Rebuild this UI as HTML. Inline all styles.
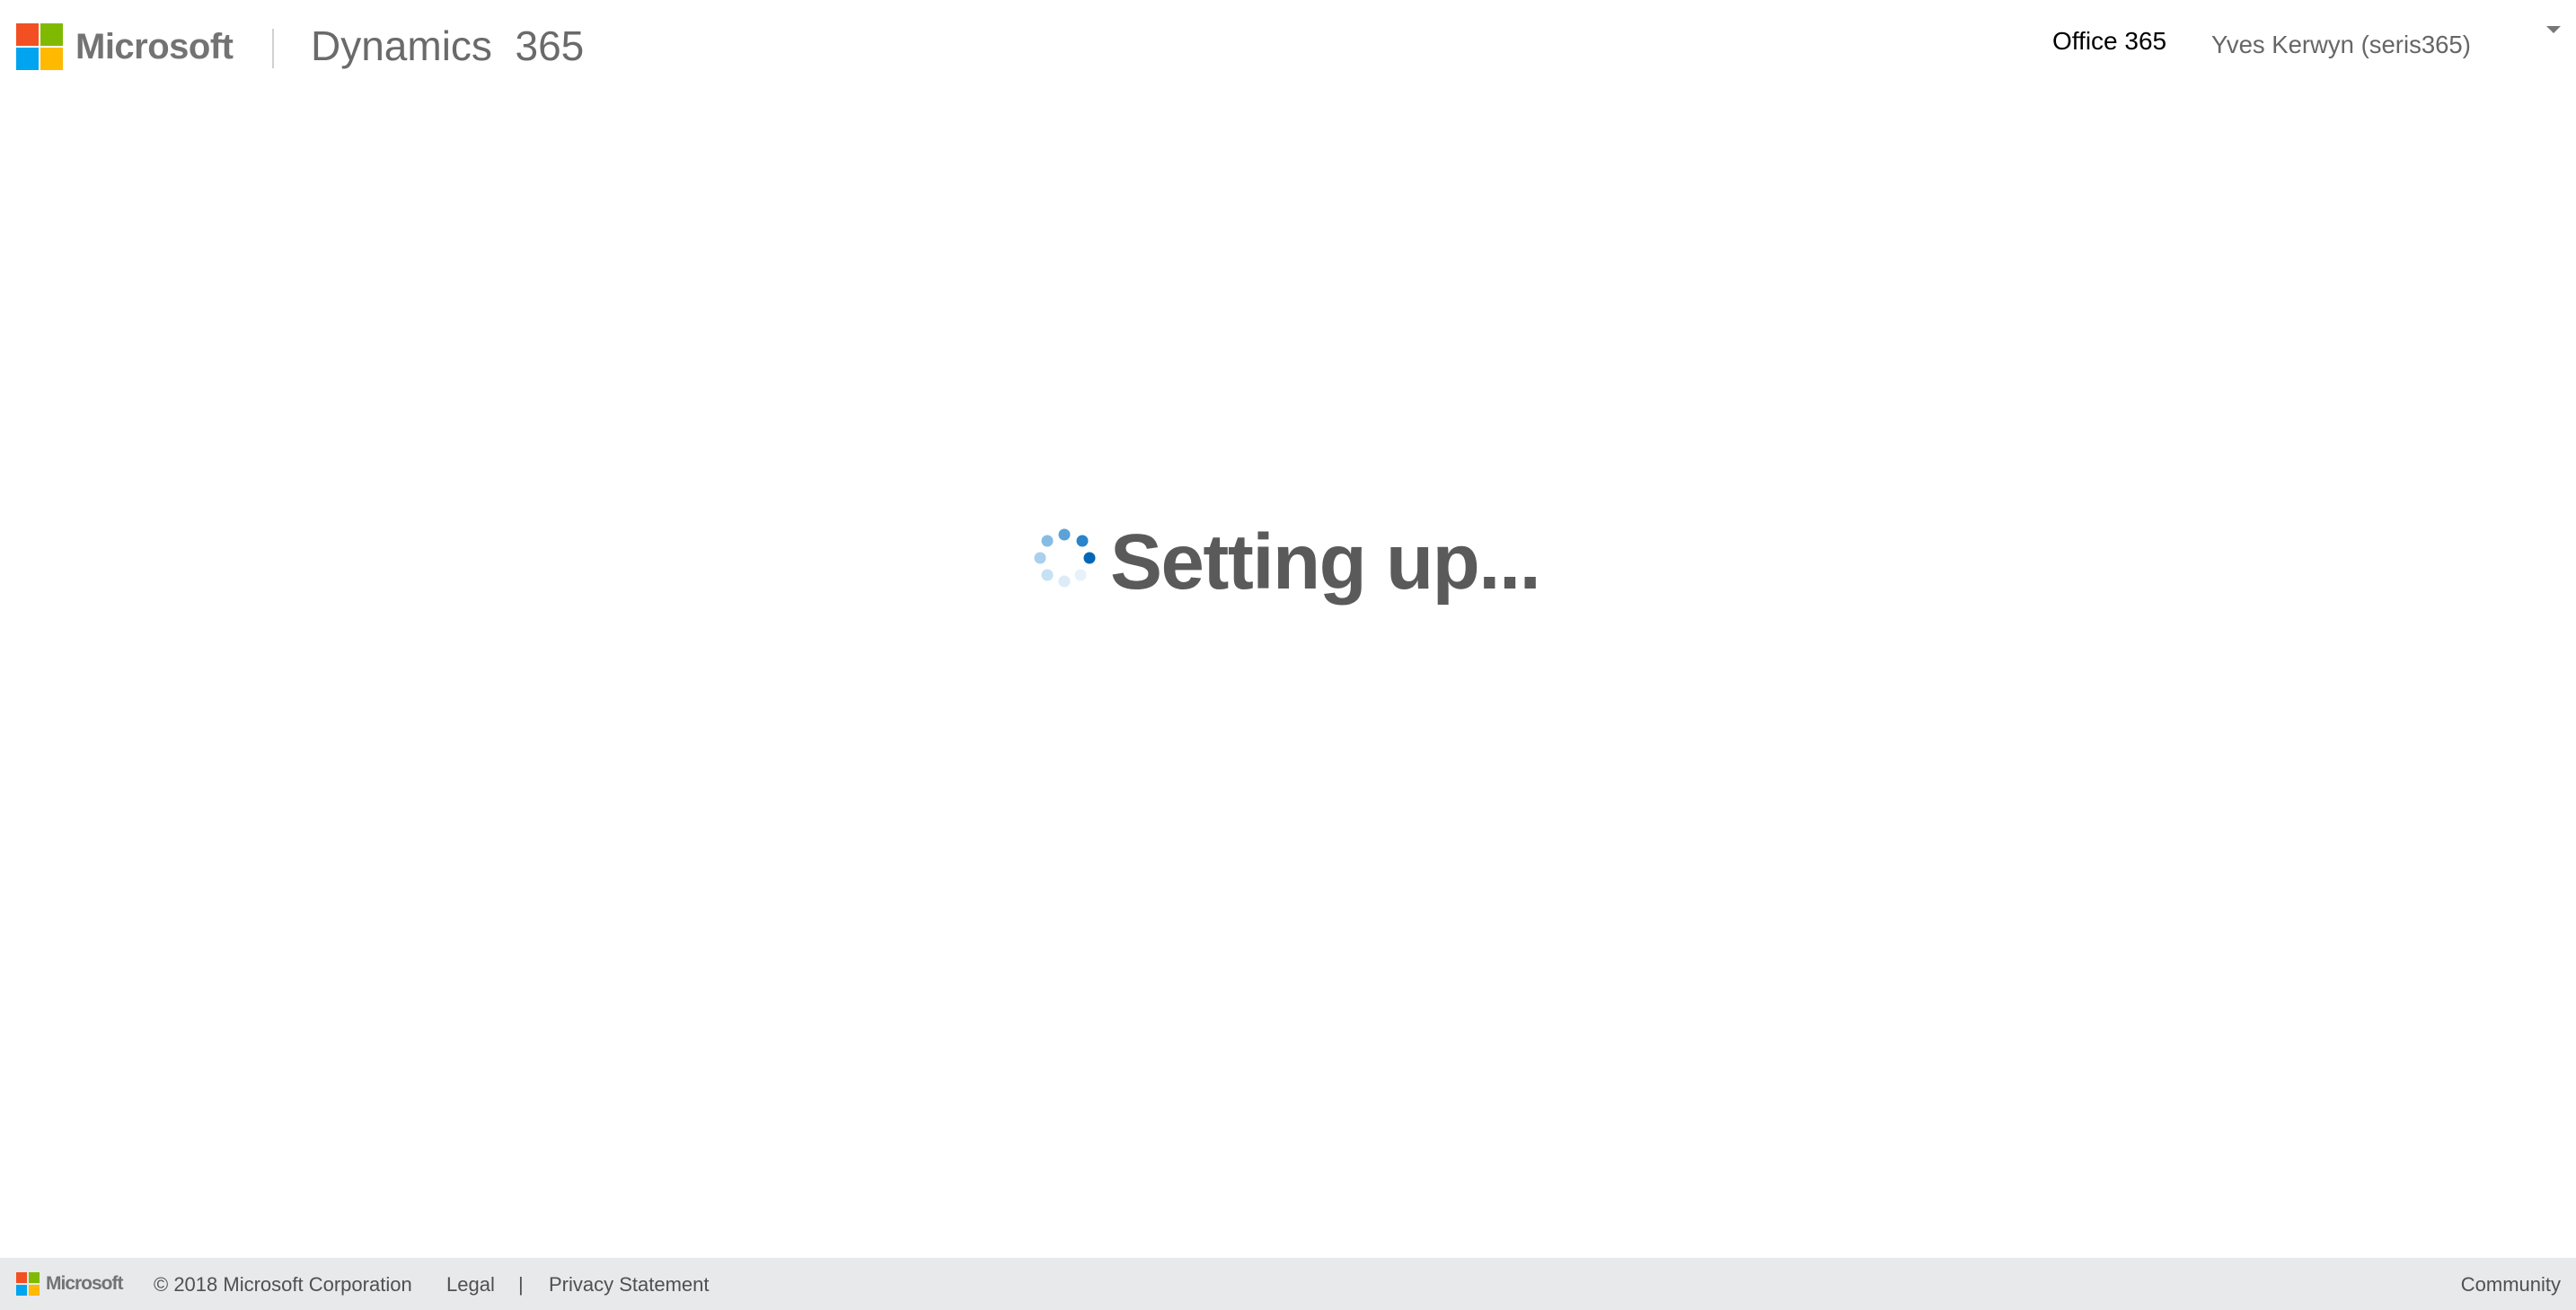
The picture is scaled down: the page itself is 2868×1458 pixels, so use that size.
<!DOCTYPE html>
<html><head><meta charset="utf-8"><style>
html,body{margin:0;padding:0;width:2868px;height:1458px;background:#fff;overflow:hidden;position:relative;font-family:"Liberation Sans",sans-serif}
.a{position:absolute;white-space:nowrap}
</style></head><body>
<div class="a" style="left:18px;top:26px;width:25px;height:25px;background:#f25022"></div>
<div class="a" style="left:45px;top:26px;width:25px;height:25px;background:#7fba00"></div>
<div class="a" style="left:18px;top:53px;width:25px;height:25px;background:#00a4ef"></div>
<div class="a" style="left:45px;top:53px;width:25px;height:25px;background:#ffb900"></div>
<div class="a" style="left:84px;top:27px;font-size:40px;line-height:50px;color:#737373;font-weight:bold;letter-spacing:-0.5px">Microsoft</div>
<div class="a" style="left:303px;top:32px;width:2px;height:44px;background:#d0d0d0"></div>
<div class="a" style="left:346px;top:24px;font-size:46px;line-height:54px;color:#6a6a6a">Dynamics&nbsp; 365</div>
<div class="a" style="left:2285px;top:29px;font-size:28px;line-height:34px;color:#000">Office 365</div>
<div class="a" style="left:2462px;top:33px;font-size:27.5px;line-height:34px;color:#666">Yves Kerwyn (seris365)</div>
<div class="a" style="left:2835px;top:29px;width:0;height:0;border-left:8px solid transparent;border-right:8px solid transparent;border-top:8px solid #777"></div>
<svg class="a" style="left:1140px;top:575px" width="90" height="90" viewBox="0 0 90 90">
<circle cx="73" cy="46" r="6.5" fill="#0067b8"/>
<circle cx="65" cy="27" r="6.5" fill="#2a84c9"/>
<circle cx="45" cy="20" r="6.5" fill="#5aa2d8"/>
<circle cx="26" cy="27" r="6.5" fill="#86bce4"/>
<circle cx="18" cy="46" r="6.5" fill="#a9d0ee"/>
<circle cx="26" cy="65" r="6.5" fill="#c6e0f4"/>
<circle cx="45" cy="72" r="6.5" fill="#dbebf8"/>
<circle cx="63" cy="65" r="6.5" fill="#e6f1fa"/>
</svg>
<div class="a" style="left:1236px;top:576px;font-size:87px;line-height:100px;font-weight:bold;color:#5a5a5a;letter-spacing:-1.5px">Setting up...</div>
<div class="a" style="left:0;top:1400px;width:2868px;height:58px;background:#e8e9eb"></div>
<div class="a" style="left:18px;top:1416px;width:12px;height:12px;background:#f25022"></div>
<div class="a" style="left:32px;top:1416px;width:12px;height:12px;background:#7fba00"></div>
<div class="a" style="left:18px;top:1430px;width:12px;height:12px;background:#00a4ef"></div>
<div class="a" style="left:32px;top:1430px;width:12px;height:12px;background:#ffb900"></div>
<div class="a" style="left:51px;top:1415px;font-size:21px;line-height:28px;color:#737373;font-weight:bold;letter-spacing:-1px">Microsoft</div>
<div class="a" style="left:171px;top:1415px;font-size:22px;line-height:30px;color:#505050">© 2018 Microsoft Corporation</div>
<div class="a" style="left:497px;top:1415px;font-size:22px;line-height:30px;color:#505050">Legal</div>
<div class="a" style="left:577px;top:1415px;font-size:22px;line-height:30px;color:#505050">|</div>
<div class="a" style="left:611px;top:1415px;font-size:22px;line-height:30px;color:#505050">Privacy Statement</div>
<div class="a" style="right:17px;top:1415px;font-size:22px;line-height:30px;color:#505050">Community</div>
</body></html>
